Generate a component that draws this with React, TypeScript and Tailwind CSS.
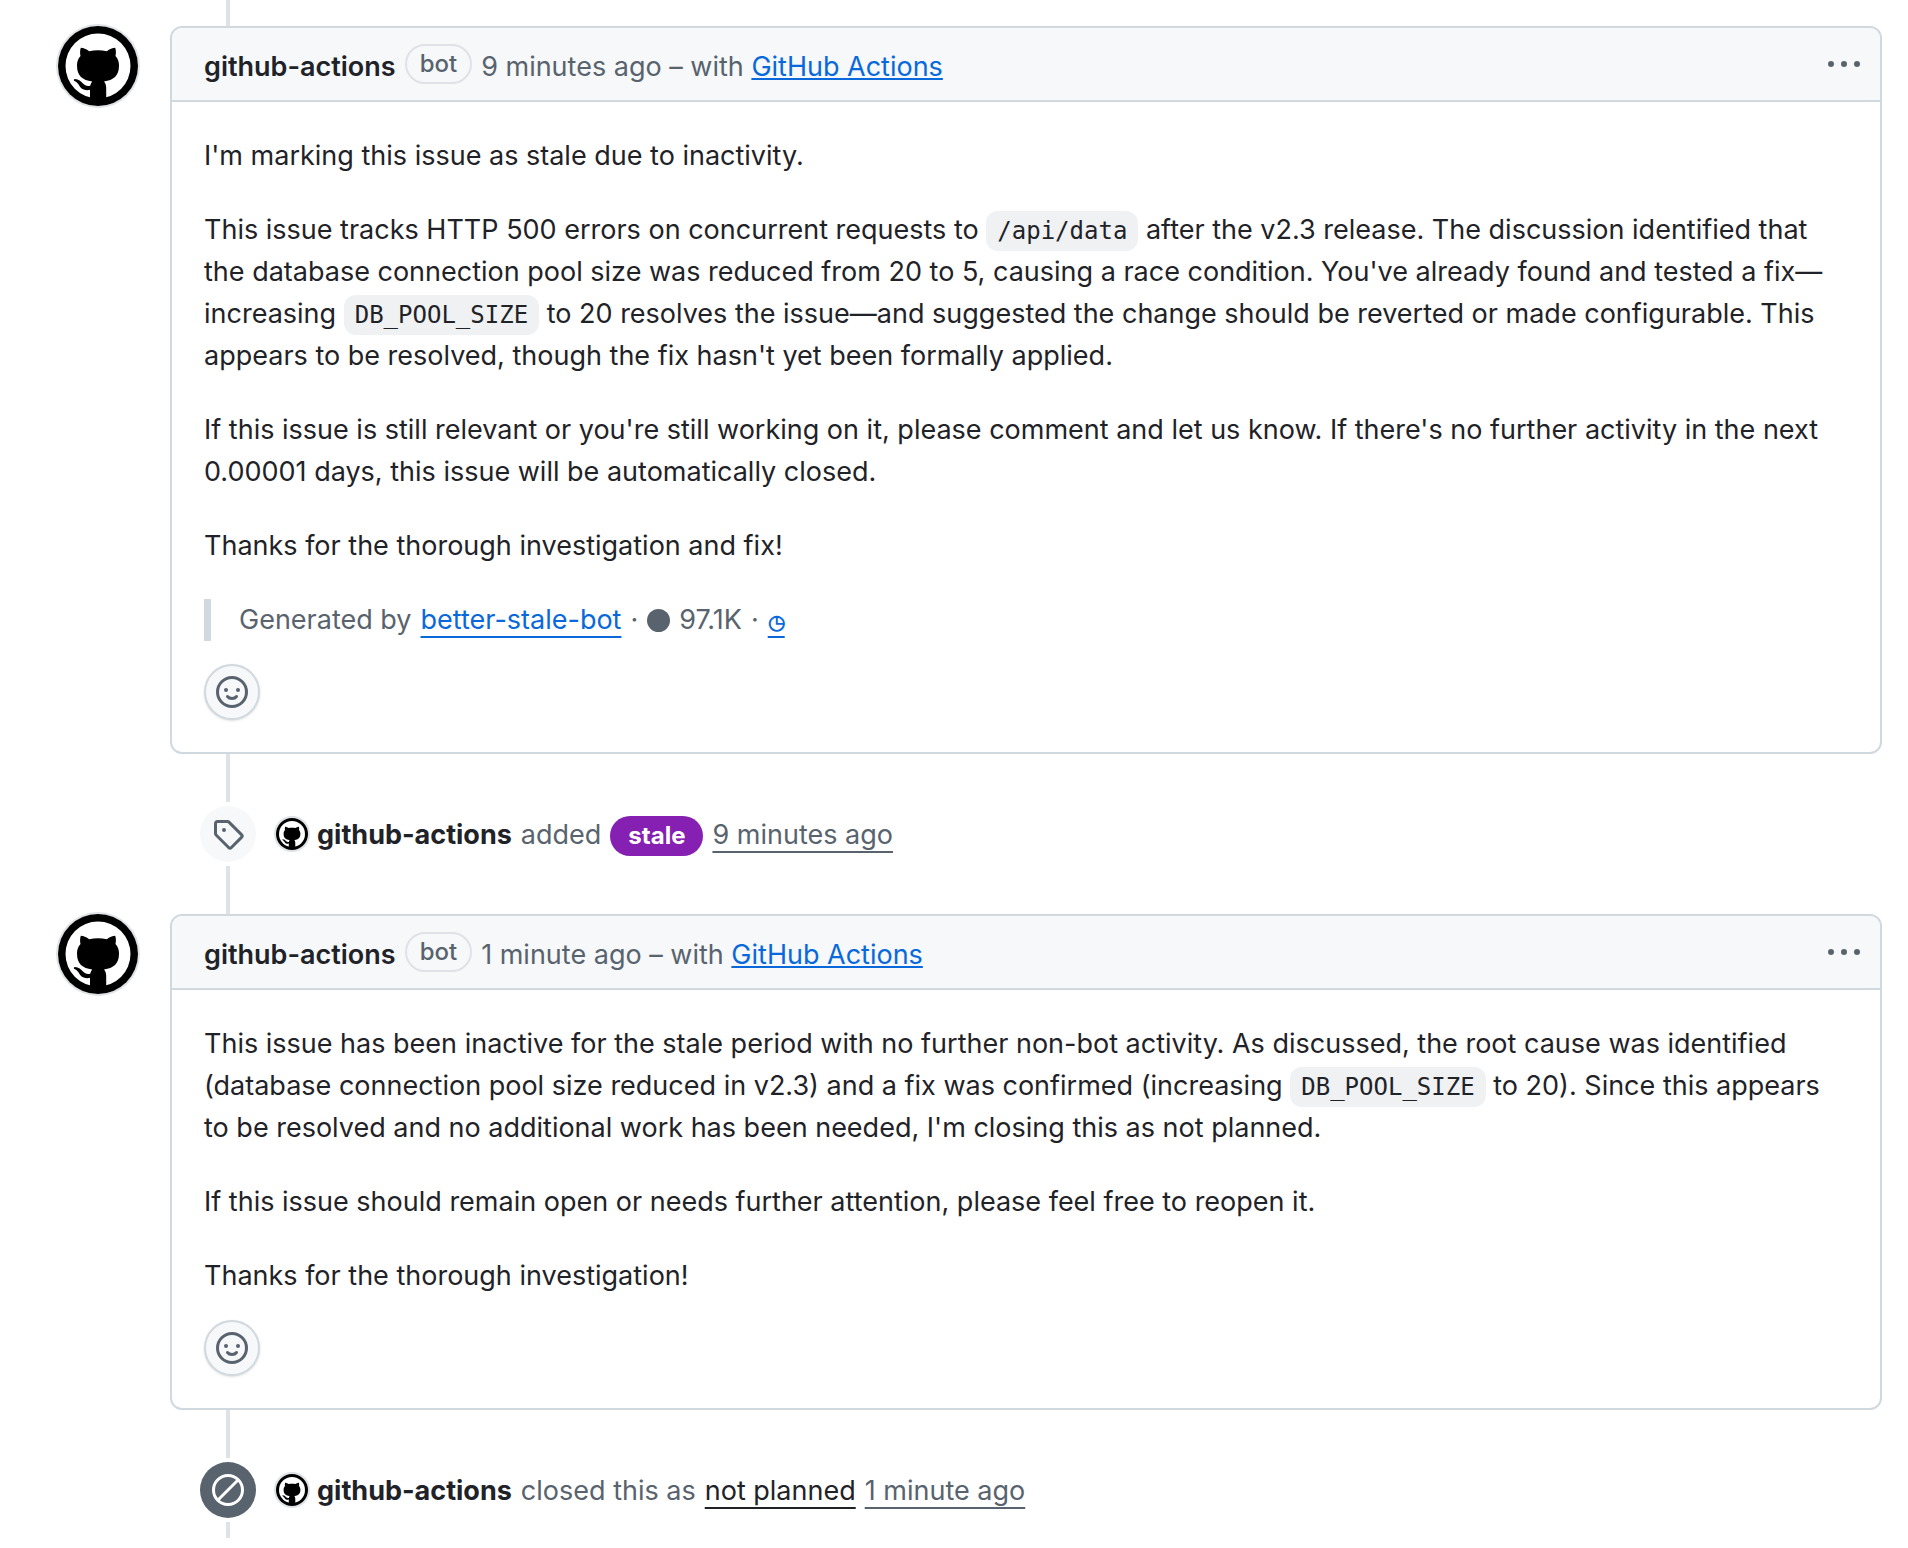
import React from "react";

function Avatar({ className }: { className: string }) {
  return (
    <svg viewBox="0 0 80 80" className={className} role="img" aria-label="github-actions avatar">
      <circle cx="40" cy="40" r="40" fill="#000" />
      <circle cx="40" cy="40" r="32.5" fill="#fff" />
      <path
        d="M22.8 21.8c2.600 0 5.700 1.500 8.400 3.400 5.500-1.200 12.100-1.200 17.600 0 2.700-1.900 5.800-3.400 8.400-3.400.9 2.700.9 5.900.3 8.300 2.300 2.600 3.500 5.700 3.500 9.400 0 10.500-5.500 14.700-15 15.900 1.400 1.500 2.200 3.600 2.200 6.600v14H32V64c-4.500.6-8.200-.4-10.200-3.600-1.600-2.600-2.800-4.600-5.800-5.700-.3-.9 0-1.500.9-1.600 3.800.4 6.200 2.200 8.100 4.500 1.800 2.100 4.200 2.600 7.200 2.100.3-1.700 1-3.100 2-4.300-9.700-1.200-15.200-5.400-15.200-15.900 0-3.700 1.200-6.800 3.500-9.400-.6-2.400-.6-5.600.3-8.300z"
        fill="#000"
      />
    </svg>
  );
}

function SmileyIcon() {
  return (
    <svg viewBox="0 0 16 16" className="size-8" fill="currentColor" aria-hidden="true">
      <path d="M8 0a8 8 0 1 1 0 16A8 8 0 0 1 8 0ZM1.5 8a6.500 6.500 0 1 0 13 0 6.500 6.500 0 0 0-13 0Z" />
      <circle cx="5" cy="7" r="1" />
      <circle cx="11" cy="7" r="1" />
      <path d="M5.750 10.250Q6.500 11.250 8 11.250T10.250 10.250" fill="none" stroke="currentColor" strokeWidth="1.500" strokeLinecap="round" />
    </svg>
  );
}

function TagIcon() {
  return (
    <svg viewBox="0 0 16 16" className="size-8" fill="currentColor" aria-hidden="true">
      <path d="M1 7.775V2.75C1 1.784 1.784 1 2.75 1h5.025c.464 0 .91.184 1.238.513l6.25 6.25a1.75 1.75 0 0 1 0 2.474l-5.026 5.026a1.75 1.75 0 0 1-2.474 0l-6.25-6.25A1.752 1.752 0 0 1 1 7.775Zm1.500 0c0 .066.026.13.073.177l6.250 6.250a.25.25 0 0 0 .354 0l5.025-5.025a.25.25 0 0 0 0-.354l-6.250-6.250a.25.25 0 0 0-.177-.073H2.750a.25.25 0 0 0-.25.25ZM6 5a1 1 0 1 1 0 2 1 1 0 0 1 0-2Z" />
    </svg>
  );
}

function SkipIcon() {
  return (
    <svg viewBox="0 0 16 16" className="size-8" fill="none" stroke="currentColor" strokeWidth="1.500" aria-hidden="true">
      <circle cx="8" cy="8" r="7.250" />
      <path d="M3 13L13 3" />
    </svg>
  );
}

function Code({ children }: { children: React.ReactNode }) {
  return (
    <code className="rounded-xl bg-[#eff1f3] px-[11px] py-[6px] font-['DejaVu_Sans_Mono',monospace] text-[24px] leading-none">
      {children}
    </code>
  );
}

const eventLink = "underline decoration-2 underline-offset-[7px] [text-decoration-skip-ink:none]";

function Comment({ time, children }: { time: string; children: React.ReactNode }) {
  return (
    <article className="flex items-start gap-8">
      <a href="#avatar" className="shrink-0 rounded-full shadow-[0_0_0_2px_#dfe2e6]">
        <Avatar className="size-20" />
      </a>
      <div className="min-w-0 flex-1 rounded-xl border-2 border-[#d1d9e0] bg-white">
        <header className="flex h-[74px] items-center justify-between rounded-t-[10px] border-b-2 border-[#d1d9e0] bg-[#f6f8fa] pr-5 pl-8">
          <div className="flex items-center gap-[9px] text-[#59636e]">
            <a href="#author" className="pt-[6px] font-semibold text-[#1f2328]">github-actions</a>
            <span className="flex h-10 items-center rounded-full border-2 border-[#dfe2e6] px-[13px] text-[24px] font-medium">bot</span>
            <span className="pt-[6px]">
              {time} – with{" "}
              <a href="#app" className="text-[#0969da] underline decoration-2 underline-offset-2">GitHub Actions</a>
            </span>
          </div>
          <button type="button" aria-label="Comment actions" className="flex h-8 items-center text-[#59636e]">
            <svg viewBox="0 0 32 6" className="h-[6px] w-8" fill="currentColor" aria-hidden="true">
              <circle cx="3" cy="3" r="3" />
              <circle cx="16" cy="3" r="3" />
              <circle cx="29" cy="3" r="3" />
            </svg>
          </button>
        </header>
        <div className="flex flex-col items-start gap-8 px-8 pt-[33px]">{children}</div>
        <div className="px-8 pt-[23px] pb-8">
          <button
            type="button"
            aria-label="Add a reaction"
            className="flex size-14 items-center justify-center rounded-full border-2 border-[#d1d9e0] bg-[#f6f8fa] text-[#59636e] shadow-sm"
          >
            <SmileyIcon />
          </button>
        </div>
      </div>
    </article>
  );
}

function Event({ icon, dark, children }: { icon: React.ReactNode; dark?: boolean; children: React.ReactNode }) {
  return (
    <div className="ml-[142px] flex items-start gap-5">
      <div className={`flex size-14 items-center justify-center rounded-full ${dark ? "bg-[#59636e] text-white" : "bg-[#f6f8fa] text-[#59636e]"}`}>
        {icon}
      </div>
      <div className="flex h-14 items-center gap-[9px] text-[#59636e]">
        <a href="#avatar" className="rounded-full shadow-[0_0_0_2px_#dfe2e6]">
          <Avatar className="size-8" />
        </a>
        {children}
      </div>
    </div>
  );
}

function Rail({ className }: { className: string }) {
  return <div className={`ml-[168px] w-1 bg-[#dfe2e6] ${className}`} />;
}

export default function App() {
  return (
    <main className="bg-white pr-[26px] pl-[58px] font-['Inter',sans-serif] text-[27px] leading-[42px] text-[#1f2328]">
      <Rail className="h-[26px]" />
      <Comment time="9 minutes ago">
        <p>I'm marking this issue as stale due to inactivity.</p>
        <p>
          This issue tracks HTTP 500 errors on concurrent requests to <Code>/api/data</Code> after the v2.3 release. The
          discussion identified that the database connection pool size was reduced from 20 to 5, causing a race
          condition. You've already found and tested a fix—increasing <Code>DB_POOL_SIZE</Code> to 20 resolves the
          issue—and suggested the change should be reverted or made configurable. This appears to be resolved, though
          the fix hasn't yet been formally applied.
        </p>
        <p>
          If this issue is still relevant or you're still working on it, please comment and let us know. If there's no
          further activity in the next 0.00001 days, this issue will be automatically closed.
        </p>
        <p>Thanks for the thorough investigation and fix!</p>
        <blockquote className="flex h-[42px] items-baseline gap-[9px] border-l-[7px] border-[#d1d9e0] pl-7 text-[#59636e]">
          <span>Generated by</span>
          <a href="#bot" className={`text-[#0969da] ${eventLink}`}>better-stale-bot</a>
          <span>·</span>
          <span className="size-[23px] self-center rounded-full bg-[#59636e]" />
          <span>97.1K</span>
          <span>·</span>
          <a href="#run" className={`text-[20px] font-bold text-[#0969da] ${eventLink}`}>◷</a>
        </blockquote>
      </Comment>
      <Rail className="mb-1 h-12" />
      <Event icon={<TagIcon />}>
        <a href="#author" className="pt-[2px] font-bold text-[#1f2328]">github-actions</a>
        <span className="pt-[2px]">added</span>
        <a href="#stale" className="mt-1 flex h-10 items-center rounded-full bg-[#8520b3] px-[18px] text-[24px] font-bold text-white">stale</a>
        <a href="#time" className={`pt-[2px] ${eventLink}`}>9 minutes ago</a>
      </Event>
      <Rail className="mt-1 h-12" />
      <Comment time="1 minute ago">
        <p>
          This issue has been inactive for the stale period with no further non-bot activity. As discussed, the root
          cause was identified (database connection pool size reduced in v2.3) and a fix was confirmed (increasing{" "}
          <Code>DB_POOL_SIZE</Code> to 20). Since this appears to be resolved and no additional work has been needed,
          I'm closing this as not planned.
        </p>
        <p>If this issue should remain open or needs further attention, please feel free to reopen it.</p>
        <p>Thanks for the thorough investigation!</p>
      </Comment>
      <Rail className="mb-1 h-12" />
      <Event dark icon={<SkipIcon />}>
        <a href="#author" className="pt-[2px] font-bold text-[#1f2328]">github-actions</a>
        <span className="pt-[2px]">closed this as</span>
        <a href="#reason" className={`pt-[2px] text-[#1f2328] ${eventLink}`}>not planned</a>
        <a href="#time" className={`pt-[2px] ${eventLink}`}>1 minute ago</a>
      </Event>
      <Rail className="mt-1 h-4" />
    </main>
  );
}
